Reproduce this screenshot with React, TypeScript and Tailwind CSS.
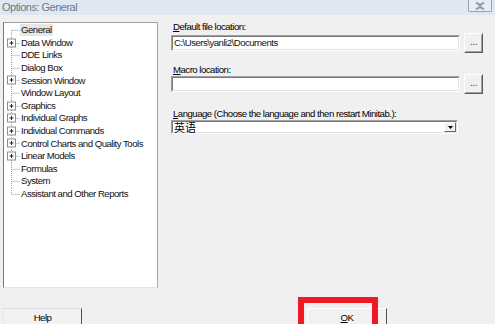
import React from "react";

const treeItems = [
  { label: "General", plus: false },
  { label: "Data Window", plus: true },
  { label: "DDE Links", plus: false },
  { label: "Dialog Box", plus: false },
  { label: "Session Window", plus: true },
  { label: "Window Layout", plus: false },
  { label: "Graphics", plus: true },
  { label: "Individual Graphs", plus: true },
  { label: "Individual Commands", plus: true },
  { label: "Control Charts and Quality Tools", plus: true },
  { label: "Linear Models", plus: true },
  { label: "Formulas", plus: false },
  { label: "System", plus: false },
  { label: "Assistant and Other Reports", plus: false },
];

function TreeGlyph({ plus, first, last }: { plus: boolean; first: boolean; last: boolean }) {
  return (
    <svg width="15" height="12.6" viewBox="0 0 15 12.6" className="shrink-0">
      <line x1="6.5" y1={first ? 6.3 : 0} x2="6.5" y2={last ? 6.3 : 12.6} stroke="#9a9a9a" strokeDasharray="1 1" />
      <line x1="6.5" y1="6.3" x2="15" y2="6.3" stroke="#9a9a9a" strokeDasharray="1 1" />
      {plus && (
        <>
          <rect x="2.5" y="2" width="8" height="8" fill="#fff" stroke="#8e8e8e" />
          <line x1="4.5" y1="6" x2="8.5" y2="6" stroke="#222" />
          <line x1="6.5" y1="4" x2="6.5" y2="8" stroke="#222" />
        </>
      )}
    </svg>
  );
}

// sunken field border, Windows classic style
function Sunken({ className, children }: { className: string; children?: React.ReactNode }) {
  return (
    <div className={`border border-t-[#a0a0a0] border-l-[#a0a0a0] border-r-[#ffffff] border-b-[#ffffff] ${className}`}>
      <div className="h-full w-full border border-t-[#7a7a7a] border-l-[#7a7a7a] border-r-[#e3e3e3] border-b-[#e3e3e3] bg-white">
        {children}
      </div>
    </div>
  );
}

function DotsButton() {
  return (
    <div className="w-[19px] h-[20px] shrink-0 border border-t-[#ffffff] border-l-[#ffffff] border-r-[#5a5a5a] border-b-[#5a5a5a]">
      <div className="h-full w-full flex items-center justify-center border border-t-[#f0f0f0] border-l-[#f0f0f0] border-r-[#a0a0a0] border-b-[#a0a0a0] bg-[#f0f0f0] text-[10px] leading-none text-[#444] pb-[2px]">
        ...
      </div>
    </div>
  );
}

export default function App() {
  return (
    <div className="relative w-[495px] h-[324px] overflow-hidden bg-[#f0f0f0] font-['Liberation_Sans',Arial,sans-serif] text-[9.6px] tracking-[-0.5px] text-black">
      {/* Title bar */}
      <div className="h-[15px] bg-[#dfe8f2] flex items-start justify-between">
        <span className="pl-[2px] pt-[1px] text-[11px] leading-[12px] text-[#6a7a8c]">Options: General</span>
        <div className="mr-[3px] w-[24px] h-[12px] border border-t-0 border-[#96a4b6] rounded-b-[2px] bg-[#e7edf4] flex items-center justify-center">
          <svg width="10" height="8" viewBox="0 0 10 8">
            <path d="M1 0.5 L5 3.2 L9 0.5 M1 7.5 L5 4.8 L9 7.5" stroke="#8e98a4" strokeWidth="2" fill="none" />
          </svg>
        </div>
      </div>

      <div className="flex h-[273px]">
        {/* Category tree */}
        <div className="ml-[3px] mt-[7px] w-[155px] h-[266px] shrink-0 border border-t-[#a0a0a0] border-l-[#7a7a7a] border-r-[#a8a8a8] border-b-[#e3e3e3] bg-white">
          <div className="pt-[1px] pl-[1px]">
            {treeItems.map((item, i) => (
              <div key={item.label} className="flex items-center h-[12.6px]">
                <TreeGlyph plus={item.plus} first={i === 0} last={i === treeItems.length - 1} />
                <span
                  className={`px-[1px] leading-[12px] text-[#111] whitespace-nowrap ${i === 0 ? "bg-[#e6e6e6]" : ""}`}
                >
                  {item.label}
                </span>
              </div>
            ))}
          </div>
        </div>

        {/* Options fields */}
        <div className="ml-[13px] mt-[6px] flex flex-col">
          <div className="leading-[11px] pl-[2px]">
            <span className="underline">D</span>efault file location:
          </div>
          <div className="mt-[1px] flex items-center gap-[4px]">
            <Sunken className="w-[289px] h-[16px]">
              <div className="pl-[1px] leading-[12px] text-[#111]">C:\Users\yanli2\Documents</div>
            </Sunken>
            <DotsButton />
          </div>

          <div className="mt-[11px] leading-[11px] pl-[2px]">
            <span className="underline">M</span>acro location:
          </div>
          <div className="mt-[-1px] flex items-center gap-[4px]">
            <Sunken className="w-[289px] h-[16px]" />
            <DotsButton />
          </div>

          <div className="mt-[14px] leading-[11px] pl-[2px]">
            <span className="underline">L</span>anguage (Choose the language and then restart Minitab.):
          </div>
          <Sunken className="mt-[1px] w-[287px] h-[14px]">
            <div className="flex h-full items-center justify-between">
              <span className="pl-[1px] text-[11px] leading-[12px] tracking-normal font-['Noto_Sans_CJK_SC',sans-serif]">英语</span>
              <div className="w-[12px] h-full border border-t-[#ffffff] border-l-[#ffffff] border-r-[#6a6a6a] border-b-[#6a6a6a] bg-[#f0f0f0] flex items-center justify-center">
                <svg width="5" height="3" viewBox="0 0 5 3">
                  <path d="M0 0 H5 L2.5 3 Z" fill="#000" />
                </svg>
              </div>
            </div>
          </Sunken>
        </div>
      </div>

      {/* Bottom buttons */}
      <div className="mt-[20px] flex">
        <div className="ml-[3px] w-[79px] h-[20px] border border-t-[#dcdcdc] border-l-[#e6e6e6] border-r-[#505050] border-b-[#505050] bg-[#f2f2f2] flex justify-center pt-[3px] leading-[12px]">
          Help
        </div>
        <div className="ml-[225px] w-[80px] h-[20px] border border-t-[#ffffff] border-l-[#ffffff] border-r-[#505050] border-b-[#505050] bg-[#f2f2f2] flex justify-center pt-[3px] leading-[12px]">
          <span>
            <span className="underline">O</span>K
          </span>
        </div>
      </div>

      {/* Red annotation frame */}
      <div className="absolute left-[298px] top-[297px] w-[80px] h-[40px] border-[6px] border-[#ee1b24]" />
    </div>
  );
}
